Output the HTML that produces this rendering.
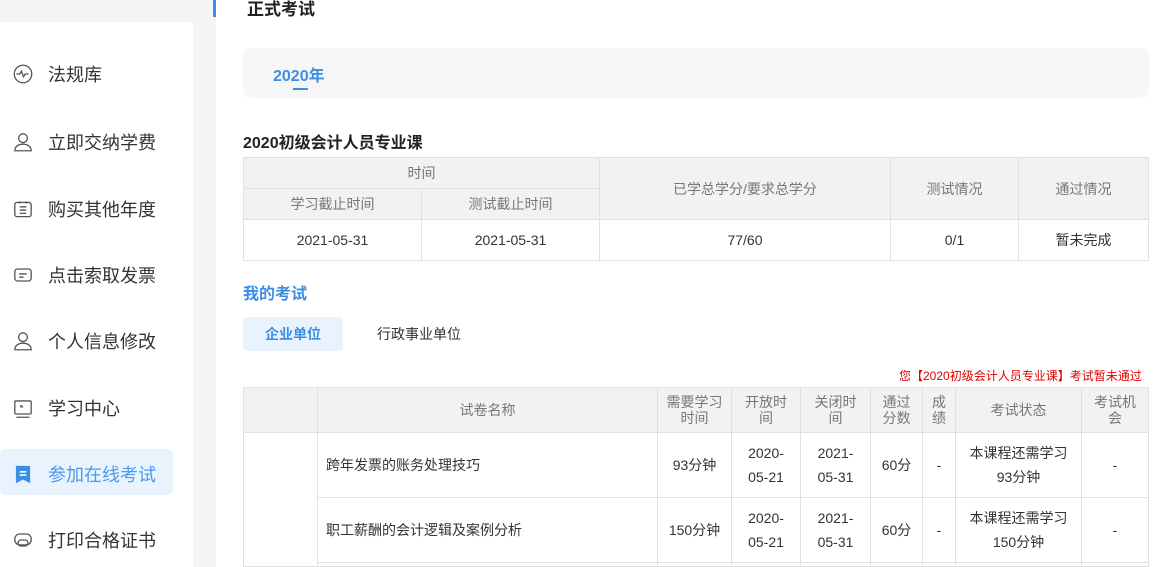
<!DOCTYPE html>
<html><head><meta charset="utf-8"><style>
*{margin:0;padding:0;box-sizing:border-box}
html,body{width:1166px;height:567px;overflow:hidden}
body{background:#fff;font-family:"Liberation Sans","Noto Sans CJK SC",sans-serif;color:#333;position:relative}
.a{position:absolute}
.nav{position:absolute;left:11px;display:flex;align-items:center;font-size:18px;color:#333}
.nav svg{width:24px;height:24px;margin-right:13px}
table{border-collapse:collapse;position:absolute;table-layout:fixed}
td,th{border:1px solid #e0e0e0;text-align:center;font-weight:normal;font-size:14px}
th{background:#f2f2f2;color:#777}
td{color:#333}
.h th{padding:0 9px}
.h th.w{padding:0 6px}
</style></head><body>
<div class="a" style="left:0;top:0;width:216px;height:567px;background:#f5f5f5"></div>
<div class="a" style="left:0;top:22px;width:193px;height:545px;background:#fff"></div>
<div class="a" style="left:213px;top:0;width:3px;height:17px;background:#3a8ee6"></div>

<div class="nav" style="top:61px"><svg viewBox="0 0 22 22" fill="none" stroke="#555" stroke-width="1.2"><circle cx="11" cy="11" r="8"/><path d="M5 11h3l1.5-2.5 2 5 1.5-2.5h3"/></svg>法规库</div>
<div class="nav" style="top:129px"><svg viewBox="0 0 22 22" fill="none" stroke="#555" stroke-width="1.2"><circle cx="11" cy="7.5" r="4"/><path d="M3.5 19c0-4 3.5-6 7.5-6s7.5 2 7.5 6z"/></svg>立即交纳学费</div>
<div class="nav" style="top:196px"><svg viewBox="0 0 22 22" fill="none" stroke="#555" stroke-width="1.2"><rect x="3.5" y="5" width="15" height="13" rx="2"/><path d="M8 9h6M8 12h6M8 15h6M8 4v2M14 4v2"/></svg>购买其他年度</div>
<div class="nav" style="top:262px"><svg viewBox="0 0 22 22" fill="none" stroke="#555" stroke-width="1.2"><rect x="3.5" y="5.5" width="15" height="11" rx="2.5"/><path d="M7.5 10h7M7.5 13h4"/></svg>点击索取发票</div>
<div class="nav" style="top:328px"><svg viewBox="0 0 22 22" fill="none" stroke="#555" stroke-width="1.2"><circle cx="11" cy="7.5" r="4"/><path d="M3.5 19c0-4 3.5-6 7.5-6s7.5 2 7.5 6z"/></svg>个人信息修改</div>
<div class="nav" style="top:395px"><svg viewBox="0 0 22 22" fill="none" stroke="#555" stroke-width="1.2"><rect x="3.5" y="4.5" width="15" height="12" rx="1"/><path d="M5 19.5h12M9 8.5l2 2M9 8.5v2"/></svg>学习中心</div>
<div class="a" style="left:0;top:449px;width:173px;height:46px;background:#e8f3fe;border-radius:6px"></div>
<div class="nav" style="top:461px;color:#4a9af0"><svg viewBox="0 0 22 22"><path d="M4.5 3.5h13v16l-6.5-3.5-6.5 3.5z" fill="#3a8ee6"/><path d="M8 9h6M8 12h6" stroke="#fff" stroke-width="1.5"/></svg>参加在线考试</div>
<div class="nav" style="top:527px"><svg viewBox="0 0 22 22" fill="none" stroke="#555" stroke-width="1.2"><rect x="3.5" y="5.5" width="15" height="10" rx="4.5"/><rect x="6.5" y="11" width="9" height="5.5" rx="2.5"/></svg>打印合格证书</div>

<div class="a" style="left:247px;top:0;font-size:17px;font-weight:bold;color:#222;line-height:20px">正式考试</div>
<div class="a" style="left:243px;top:48px;width:906px;height:50px;background:#f6f6f6;border-radius:8px"></div>
<div class="a" style="left:273px;top:62px;font-size:16px;font-weight:bold;color:#3a8ee6">2020年</div>
<div class="a" style="left:293px;top:88px;width:15px;height:2px;background:#3a8ee6"></div>

<div class="a" style="left:243px;top:129px;font-size:16px;font-weight:bold;color:#222">2020初级会计人员专业课</div>
<table style="left:243px;top:157px;width:905px">
<colgroup><col style="width:178px"><col style="width:178px"><col style="width:291px"><col style="width:128px"><col style="width:130px"></colgroup>
<tr style="height:31px"><th colspan="2">时间</th><th rowspan="2">已学总学分/要求总学分</th><th rowspan="2">测试情况</th><th rowspan="2">通过情况</th></tr>
<tr style="height:31px"><th>学习截止时间</th><th>测试截止时间</th></tr>
<tr style="height:41px"><td>2021-05-31</td><td>2021-05-31</td><td>77/60</td><td>0/1</td><td>暂未完成</td></tr>
</table>

<div class="a" style="left:243px;top:280px;font-size:16px;font-weight:bold;color:#3a8ee6">我的考试</div>
<div class="a" style="left:243px;top:317px;width:100px;height:34px;background:#e8f3fe;border-radius:4px;color:#3a8ee6;font-weight:bold;font-size:14px;text-align:center;line-height:34px">企业单位</div>
<div class="a" style="left:377px;top:317px;font-size:14px;line-height:34px;color:#333">行政事业单位</div>
<div class="a" style="left:899px;top:367px;font-size:12px;color:#d00">您【2020初级会计人员专业课】考试暂未通过</div>

<table style="left:243px;top:387px;width:905px;line-height:16px">
<colgroup><col style="width:74px"><col style="width:340px"><col style="width:74px"><col style="width:69px"><col style="width:70px"><col style="width:52px"><col style="width:33px"><col style="width:126px"><col style="width:67px"></colgroup>
<tr class="h" style="height:45px"><th></th><th>试卷名称</th><th class="w">需要学习时间</th><th>开放时间</th><th>关闭时间</th><th>通过分数</th><th>成绩</th><th>考试状态</th><th>考试机会</th></tr>
<tr style="height:65px"><td rowspan="3"></td><td style="text-align:left;padding-left:8px">跨年发票的账务处理技巧</td><td>93分钟</td><td style="line-height:24px">2020-<br>05-21</td><td style="line-height:24px">2021-<br>05-31</td><td>60分</td><td>-</td><td style="line-height:24px">本课程还需学习<br>93分钟</td><td>-</td></tr>
<tr style="height:65px"><td style="text-align:left;padding-left:8px">职工薪酬的会计逻辑及案例分析</td><td>150分钟</td><td style="line-height:24px">2020-<br>05-21</td><td style="line-height:24px">2021-<br>05-31</td><td>60分</td><td>-</td><td style="line-height:24px">本课程还需学习<br>150分钟</td><td>-</td></tr>
<tr style="height:4px;line-height:0"><td></td><td></td><td></td><td></td><td></td><td></td><td></td><td></td></tr>
</table>
</body></html>
